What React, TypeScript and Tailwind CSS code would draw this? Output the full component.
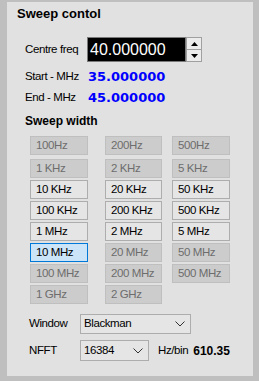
import { useState } from "react";

type Btn = { label: string; enabled: boolean };

const rows: Btn[][] = [
  [
    { label: "100Hz", enabled: false },
    { label: "200Hz", enabled: false },
    { label: "500Hz", enabled: false }
  ],
  [
    { label: "1 KHz", enabled: false },
    { label: "2 KHz", enabled: false },
    { label: "5 KHz", enabled: false }
  ],
  [
    { label: "10 KHz", enabled: true },
    { label: "20 KHz", enabled: true },
    { label: "50 KHz", enabled: true }
  ],
  [
    { label: "100 KHz", enabled: true },
    { label: "200 KHz", enabled: true },
    { label: "500 KHz", enabled: true }
  ],
  [
    { label: "1 MHz", enabled: true },
    { label: "2 MHz", enabled: true },
    { label: "5 MHz", enabled: true }
  ],
  [
    { label: "10 MHz", enabled: true },
    { label: "20 MHz", enabled: false },
    { label: "50 MHz", enabled: false }
  ],
  [
    { label: "100 MHz", enabled: false },
    { label: "200 MHz", enabled: false },
    { label: "500 MHz", enabled: false }
  ],
  [
    { label: "1 GHz", enabled: false },
    { label: "2 GHz", enabled: false }
  ]
];

const colMargins = ["ml-[23px]", "ml-[17px]", "ml-[10px]"];
const colWidths = ["w-[58px]", "w-[57px]", "w-[58px]"];

function Chevron() {
  return (
    <svg width="10" height="6" viewBox="0 0 10 6" className="shrink-0">
      <polyline
        points="0.5,0.5 5,5 9.5,0.5"
        fill="none"
        stroke="#333"
        strokeWidth="1"
      />
    </svg>
  );
}

export default function App() {
  const [selected, setSelected] = useState("10 MHz");

  return (
    <div className="w-[259px] h-[381px] bg-[#bfbfbf] pt-[2px] pl-[7px] font-['Liberation_Sans',Arial,sans-serif] text-black">
      <div className="w-[246px] h-[374px] bg-[#e1e1e1] flex flex-col">
        <div className="ml-[10px] mt-[4px] h-[16px] leading-[16px] text-[13px] font-bold">
          Sweep contol
        </div>

        <div className="flex items-center mt-[15px] h-[25px]">
          <span className="ml-[18px] w-[62px] text-[11.5px] tracking-[-0.4px]">
            Centre freq
          </span>
          <div className="w-[99px] h-[25px] bg-black border border-[#7a7a7a] text-white text-[16px] leading-[23px] pl-[2px]">
            40.000000
          </div>
          <div className="w-[16px] h-[25px] border border-[#a0a0a0] bg-[#e8e8e8] flex flex-col">
            <div className="flex-1 flex items-center justify-center border-b border-[#a0a0a0] bg-[#ececec]">
              <svg width="7" height="4" viewBox="0 0 7 4">
                <polygon points="0,4 7,4 3.5,0" fill="#000" />
              </svg>
            </div>
            <div className="flex-1 flex items-center justify-center bg-[#ececec]">
              <svg width="7" height="4" viewBox="0 0 7 4">
                <polygon points="0,0 7,0 3.5,4" fill="#000" />
              </svg>
            </div>
          </div>
        </div>

        <div className="flex items-center mt-[4px] h-[21px]">
          <span className="ml-[18px] w-[63px] text-[11.5px] tracking-[-0.4px]">
            Start - MHz
          </span>
          <span className="font-['DejaVu_Sans',sans-serif] font-bold text-[13px] text-[#0000ff]">
            35.000000
          </span>
        </div>
        <div className="flex items-center h-[21px]">
          <span className="ml-[18px] w-[63px] text-[11.5px] tracking-[-0.4px]">
            End - MHz
          </span>
          <span className="font-['DejaVu_Sans',sans-serif] font-bold text-[13px] text-[#0000ff]">
            45.000000
          </span>
        </div>

        <div className="ml-[18px] mt-[6px] h-[15px] leading-[15px] text-[12px] font-bold">
          Sweep width
        </div>

        <div className="mt-[7px] flex flex-col">
          {rows.map((row, ri) => (
            <div
              key={ri}
              className={`flex ${ri === 0 ? "mb-[4px]" : "mb-[2px]"}`}
            >
              {row.map((btn, ci) => {
                const isSel = btn.label === selected;
                const cls = isSel
                  ? "bg-[#cce4f7] border-[#0078d7] text-black"
                  : btn.enabled
                    ? "bg-[#e5e5e5] border-[#adadad] text-black"
                    : "bg-[#cccccc] border-[#bfbfbf] text-[#6d6d6d]";
                return (
                  <button
                    key={btn.label}
                    type="button"
                    disabled={!btn.enabled}
                    onClick={() => setSelected(btn.label)}
                    className={`${colMargins[ci]} ${colWidths[ci]} h-[19px] border ${cls} text-left pl-[5px] text-[11.5px] tracking-[-0.4px] leading-[17px]`}
                  >
                    {btn.label}
                  </button>
                );
              })}
            </div>
          ))}
        </div>

        <div className="flex items-center mt-[8px] h-[20px]">
          <span className="ml-[22px] w-[51px] text-[11.5px] tracking-[-0.4px]">
            Window
          </span>
          <div className="w-[111px] h-[20px] border border-[#adadad] bg-[#e5e5e5] flex items-center justify-between pl-[3px] pr-[5px] text-[11.5px] tracking-[-0.4px]">
            <span>Blackman</span>
            <Chevron />
          </div>
        </div>

        <div className="flex items-center mt-[6px] h-[21px]">
          <span className="ml-[22px] w-[51px] text-[11.5px] tracking-[-0.4px]">
            NFFT
          </span>
          <div className="w-[69px] h-[21px] border border-[#adadad] bg-[#e5e5e5] flex items-center justify-between pl-[3px] pr-[5px] text-[11.5px] tracking-[-0.4px]">
            <span>16384</span>
            <Chevron />
          </div>
          <span className="ml-[9px] text-[11.5px] tracking-[-0.4px]">Hz/bin</span>
          <span className="ml-[5px] text-[12px] font-bold">610.35</span>
        </div>
      </div>
    </div>
  );
}
